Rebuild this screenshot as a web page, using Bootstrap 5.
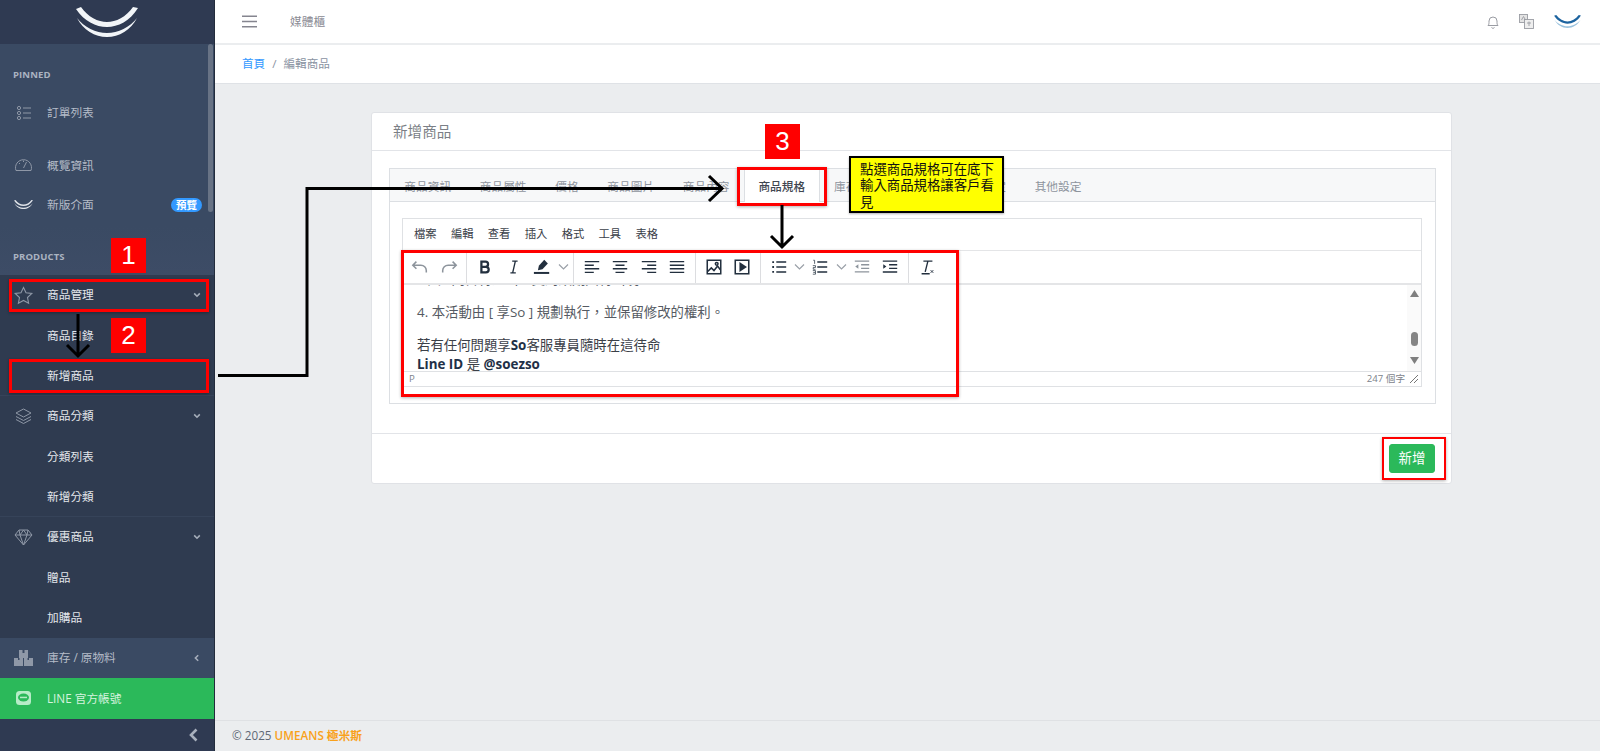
<!DOCTYPE html>
<html lang="zh-Hant">
<head>
<meta charset="utf-8">
<title>新增商品</title>
<link href="https://cdn.jsdelivr.net/npm/bootstrap@5.3.0/dist/css/bootstrap.min.css" rel="stylesheet">
<style>
body{font-family:"Open Sans","Noto Sans CJK TC",sans-serif;font-size:11.7px;background:#ebedef;overflow:hidden;height:751px;color:#3c4b64}
.page-shell{height:751px;position:relative}
.side{width:215px;flex:none;background:#3a4a63;border-right:1px solid #232c3c;position:relative;height:751px;overflow:hidden}
.side-logo{height:44px;background:#2f3a52;color:#f2f5f8}
.side-logo svg{width:62px;height:30px}
.side-title{font-size:9.5px;font-weight:700;color:#aab3c1;padding-left:13px;letter-spacing:.1px}
.t-pinned{height:49px;padding-top:24px}
.t-products{height:50px;padding-top:25px;background:linear-gradient(#3a4a63,#3d4c66)}
.gap-pinned{height:13px}
.side-item{height:40.350px;display:flex;align-items:center;color:#d3d8e0;text-decoration:none;padding-left:13px;position:relative}
.item-plain{height:40px}
.ico{width:21px;height:20px;flex:none;margin-right:13px;color:#8f98a7}
.side-item .lbl{flex:1}
.chev{width:8px;height:8px;margin-right:13px;color:#a5adba}
.dark-block{background:#2f3b50}
.dark-block .side-item{color:#e3e6eb}
.sep-bottom{border-bottom:1px solid #364359}
.dim{color:#b5bcc8!important}
.line-item{background:#2bb95a;color:#d6f3df!important;height:41px}
.line-item .ico{color:#b6ecc7}
.side-foot{height:32px;background:#2f3a52;color:#a9b1be;padding-right:15px}
.side-foot svg{width:11px;height:14px}
.side-thumb{position:absolute;right:1px;top:44px;width:5px;height:168px;border-radius:3px;background:#687385}
.pill-new{background:#3399ff;color:#fff;font-size:10.5px;font-weight:700;padding:1px 5px;margin-right:12px;line-height:12px}
.main-col{min-width:0}
.top-bar{height:45px;background:#fff;border-bottom:2px solid #ebedef;padding:0 18px 0 27px}
.burger{width:15px;height:13px;color:#85858f;margin-right:33px}
.top-name{color:#8a8a93}
.top-right{gap:19px}
.top-ico{color:#9a9ca3}
.crumb-bar{height:39px;background:#fff;border-bottom:1px solid #dfe2e6;padding:0 27px}
.crumb-bar .breadcrumb{font-size:11.600px;margin:0;--bs-breadcrumb-divider-color:#8a93a2;--bs-breadcrumb-item-active-color:#8a93a2;--bs-breadcrumb-item-padding-x:7px}
.crumb-bar a{color:#3399ff;text-decoration:none}
.content-zone{padding:28px 148px 0 156px}
.goods-card{height:372px;border-color:#e0e2e6;border-radius:3px}
.goods-head{height:38px;flex:none;background:#fff;font-size:14.6px;color:#7b7f86;padding:0 21px;display:flex;align-items:center;border-color:#e2e4e8}
.goods-body{padding:17px 15px 29px 17px;flex:none}
.tab-box{border:1px solid #dcdfe3;height:236px}
.goods-tabs{background:#f7f8f9;height:33px;border-bottom:1px solid #dcdfe3;padding-left:0;flex-wrap:nowrap}
.goods-tabs .nav-link{color:#8e949d;font-size:11.7px;padding:0 14.350px;height:33px;line-height:34px;border:0;border-radius:0;margin:0;white-space:nowrap}
.goods-tabs .nav-link.active{background:#fff;color:#3f4650;font-weight:500;border-left:1px solid #dcdfe3;border-right:1px solid #dcdfe3;height:33px;padding:0 13.500px}
.goods-tabs .nav-link.tab-wide{padding-left:17.350px}
.tab-pane-wrap{padding:16px 13px 17px 12px}
.editor{border:1px solid #dfe1e4;height:169px;background:#fff}
.ed-menu{height:32px;border-bottom:1px solid #e4e5e7;padding-left:11px;gap:14.300px;font-size:11.3px;color:#3a4048}
.ed-tools{height:34px;border-bottom:2px solid #e4e5e7}
.tgroup{display:flex;align-items:center;height:100%;padding:0 3px 0 4px;border-right:1px solid #dcdde0;flex:none}
.tgroup.tg-first{padding-left:3px}
.tgroup.nosep{border-right:0}
.tbtn{width:28.5px;height:100%;display:flex;align-items:center;justify-content:center;color:#222f3e}
.tbtn svg{width:18px;height:18px}
.tbtn.off{color:#8d949c}
.tmini{width:13px;height:100%;display:flex;align-items:center;justify-content:center;color:#9aa0a8}
.tmini svg{width:11px;height:8px}
.ed-body{height:86px;overflow:hidden}
.ed-text{padding:0 14px;font-size:13.4px;line-height:19px;color:#555a62;margin-bottom:-3px}
.ed-text p{margin:0 0 14px}
.ed-text p:last-child{margin:0}
.ed-strong{color:#3b4048}
.ed-strong b{color:#1f3047}
.fake-scroll{width:14px;flex:none;background:#fafafa;color:#7f7f7f;padding:5px 0 4px}
.fake-scroll svg{width:9px;height:7px}
.fake-thumb{width:7px;height:14px;border-radius:4px;background:#858585;margin:35px 0 11px}
.ed-status{height:15px;border-top:1px solid #dfe1e4;font-size:9.6px;color:#7d838b;padding:0 3px 0 6px}
.grip{width:8px;height:8px;margin-left:5px;color:#777}
.goods-foot{height:50px;flex:none;background:#fff;border-color:#e2e4e8;padding:0 16px 0 15px}
.add-btn{width:46px;height:29px;padding:0;background:#2bb95a;border-color:#2bb95a;font-size:13.4px;border-radius:3px}
.page-foot{height:31px;border-top:1px solid #dfe1e4;background:#ebedef;padding:0 17px;font-size:11.7px;color:#5f6875}
.page-foot strong{color:#f9a11b;font-weight:600}
.mark-box{position:absolute;border:3px solid #f00;box-shadow:0 1px 3px rgba(0,0,0,.3)}
.num-tag{position:absolute;width:35px;height:35px;background:#f00;color:#fff;font:26px/35px "Liberation Sans",sans-serif;text-align:center}
.note-box{position:absolute;left:849px;top:156px;width:155px;height:57px;background:#ff0;border:2px solid #000;color:#111;font-size:13.4px;line-height:16.300px;padding:3px 8px 0 9px;box-shadow:0 1px 2px rgba(0,0,0,.3)}
.arrows{position:absolute;left:0;top:0;width:1600px;height:751px;pointer-events:none}
</style>
</head>
<body>
<svg width="0" height="0" class="position-absolute">
<symbol id="umark" viewBox="0 0 62 30"><path fill="currentColor" d="M0 2 5 0C12 10 22 15 31 15C40 15 50 10 57 0L62 1C54 14 42 20 31 20C20 20 8 14 0 2Z"/><path fill="currentColor" d="M1 11C8 20 20 26 31 26C42 26 54 20 61 11C55 23 43 30 31 30C19 30 7 23 1 11Z"/></symbol>
<symbol id="cdown" viewBox="0 0 10 10"><path d="M1.500 3 5 6.500 8.500 3" fill="none" stroke="currentColor" stroke-width="2"/></symbol>
<symbol id="tchev" viewBox="0 0 11 8"><path d="M1 1.500 5.500 6 10 1.500" fill="none" stroke="currentColor" stroke-width="1.200"/></symbol>
</svg>
<div class="page-shell d-flex">
  <aside class="side d-flex flex-column">
    <div class="side-logo d-flex align-items-center justify-content-center"><svg><use href="#umark"/></svg></div>
    <div class="side-title t-pinned">PINNED</div>
    <a class="side-item item-plain dim" href="#"><svg class="ico" viewBox="0 0 21 20" fill="none" stroke="currentColor"><circle cx="6" cy="5" r="1.600"/><circle cx="6" cy="10" r="1.600"/><circle cx="6" cy="15" r="1.600"/><path d="M10 5h8M10 10h8M10 15h8"/></svg><span class="lbl">訂單列表</span></a>
    <div class="gap-pinned"></div>
    <a class="side-item item-plain dim" href="#"><svg class="ico" viewBox="0 0 21 20" fill="none" stroke="currentColor"><path d="M3 15.500a8 8 0 1 1 15 0z"/><path d="m10.500 13 3-6M6 8l1 1M10.500 5.500V7"/></svg><span class="lbl">概覽資訊</span></a>
    <a class="side-item item-plain dim" href="#"><svg class="ico" viewBox="0 0 21 20" style="color:#dfe3e8"><use href="#umark" x="1" y="4" width="19" height="11"/></svg><span class="lbl">新版介面</span><span class="badge rounded-pill pill-new">預覽</span></a>
    <div class="side-title t-products">PRODUCTS</div>
    <div class="dark-block">
      <a class="side-item" href="#"><svg class="ico" viewBox="0 0 21 20" fill="none" stroke="currentColor" stroke-width="1.100"><path d="m10.500 2.500 2.500 5.300 5.800.7-4.300 4 1.100 5.700-5.100-2.800-5.100 2.800 1.100-5.700-4.300-4 5.800-.7z"/></svg><span class="lbl">商品管理</span><svg class="chev"><use href="#cdown"/></svg></a>
      <a class="side-item" href="#"><span class="ico"></span><span class="lbl">商品目錄</span></a>
      <a class="side-item sep-bottom" href="#"><span class="ico"></span><span class="lbl">新增商品</span></a>
      <a class="side-item" href="#"><svg class="ico" viewBox="0 0 21 20" fill="none" stroke="currentColor"><path d="m10.500 3 7.500 4-7.500 4L3 7zM3 10.500l7.500 4 7.500-4M3 13.500l7.500 4 7.500-4"/></svg><span class="lbl">商品分類</span><svg class="chev"><use href="#cdown"/></svg></a>
      <a class="side-item" href="#"><span class="ico"></span><span class="lbl">分類列表</span></a>
      <a class="side-item sep-bottom" href="#"><span class="ico"></span><span class="lbl">新增分類</span></a>
      <a class="side-item" href="#"><svg class="ico" viewBox="0 0 21 20" fill="none" stroke="currentColor"><path d="M6 3h9l4 5-8.500 10L2 8zM2 8h17M7 8l3.500 10L14 8M6 3l1 5 3.500-5 3.500 5 1-5"/></svg><span class="lbl">優惠商品</span><svg class="chev"><use href="#cdown"/></svg></a>
      <a class="side-item" href="#"><span class="ico"></span><span class="lbl">贈品</span></a>
      <a class="side-item" href="#"><span class="ico"></span><span class="lbl">加購品</span></a>
    </div>
    <a class="side-item dim" href="#"><svg class="ico" viewBox="0 0 21 20" fill="currentColor"><path d="M6 2h3.500v3h2V2H15v8H6zM1 10h4v2h1.500v-2H10v8H1zM11 10h3.500v2H16v-2h4v8h-9z"/></svg><span class="lbl">庫存 / 原物料</span><svg class="chev" viewBox="0 0 10 10"><path d="M6.500 1.500 3 5l3.500 3.500" fill="none" stroke="currentColor" stroke-width="2"/></svg></a>
    <a class="side-item line-item" href="#"><svg class="ico" viewBox="0 0 21 20"><rect x="3" y="2" width="15" height="14" rx="3.500" fill="currentColor"/><ellipse cx="10.500" cy="8.500" rx="5.500" ry="4" fill="#2bb95a"/><rect x="7" y="7.700" width="7" height="1.500" fill="currentColor"/></svg><span class="lbl">LINE 官方帳號</span></a>
    <div class="side-foot flex-grow-1 d-flex align-items-center justify-content-end"><svg viewBox="0 0 11 14"><path d="M8.500 1.500 3 7l5.500 5.500" fill="none" stroke="currentColor" stroke-width="2.600"/></svg></div>
    <div class="side-thumb"></div>
  </aside>

  <div class="main-col flex-grow-1 d-flex flex-column">
    <header class="top-bar d-flex align-items-center">
      <svg class="burger" viewBox="0 0 15 13" fill="none" stroke="currentColor" stroke-width="1.500"><path d="M0 1.200h15M0 6.500h15M0 11.800h15"/></svg>
      <span class="top-name">媒體櫃</span>
      <div class="ms-auto d-flex align-items-center top-right">
        <svg class="top-ico" width="14" height="16" viewBox="0 0 14 16" fill="none" stroke="currentColor"><path d="M2 11.500c1-1 1-2 1-4.500a4 4 0 0 1 8 0c0 2.500 0 3.500 1 4.500zM5.500 13.500c.5 1 2.500 1 3 0"/></svg>
        <svg class="top-ico" width="15" height="15" viewBox="0 0 15 15" fill="none" stroke="currentColor" stroke-width=".9"><rect x=".5" y=".5" width="8" height="8" fill="#e4e4e4"/><rect x="5.500" y="5.500" width="9" height="9" fill="#eee"/><path d="M2.500 6 4.500 2.500 6.500 6M8 9h4M10 7.500V12"/></svg>
        <svg width="29" height="13" viewBox="0 0 62 30"><path fill="#1c639f" d="M0 2 5 0C12 10 22 15 31 15C40 15 50 10 57 0L62 1C54 14 42 20 31 20C20 20 8 14 0 2Z"/><path fill="#9cc3de" d="M1 11C8 20 20 26 31 26C42 26 54 20 61 11C55 23 43 30 31 30C19 30 7 23 1 11Z"/></svg>
      </div>
    </header>
    <nav class="crumb-bar d-flex align-items-center" aria-label="breadcrumb">
      <ol class="breadcrumb"><li class="breadcrumb-item"><a href="#">首頁</a></li><li class="breadcrumb-item active" aria-current="page">編輯商品</li></ol>
    </nav>
    <main class="content-zone flex-grow-1">
      <div class="card goods-card">
        <div class="card-header goods-head">新增商品</div>
        <div class="card-body goods-body">
          <div class="tab-box">
            <ul class="nav goods-tabs">
              <li class="nav-item"><a class="nav-link" href="#">商品資訊</a></li>
              <li class="nav-item"><a class="nav-link" href="#">商品屬性</a></li>
              <li class="nav-item"><a class="nav-link" href="#">價格</a></li>
              <li class="nav-item"><a class="nav-link" href="#">商品圖片</a></li>
              <li class="nav-item"><a class="nav-link" href="#">商品內容</a></li>
              <li class="nav-item"><a class="nav-link active" href="#">商品規格</a></li>
              <li class="nav-item"><a class="nav-link" href="#">庫存設定</a></li>
              <li class="nav-item"><a class="nav-link tab-wide" href="#">物流付款方式設定</a></li>
              <li class="nav-item"><a class="nav-link" href="#">其他設定</a></li>
            </ul>
            <div class="tab-pane-wrap">
              <div class="editor d-flex flex-column">
                <div class="ed-menu d-flex align-items-center"><span>檔案</span><span>編輯</span><span>查看</span><span>插入</span><span>格式</span><span>工具</span><span>表格</span></div>
                <div class="ed-tools d-flex">
                  <div class="tgroup tg-first">
                    <span class="tbtn off"><svg viewBox="0 0 20 20" fill="none" stroke="currentColor" stroke-width="1.700"><path d="M6 4 2 8l4 4M2 8h9a6 6 0 0 1 6 6v2"/></svg></span>
                    <span class="tbtn off"><svg viewBox="0 0 20 20" fill="none" stroke="currentColor" stroke-width="1.700"><path d="m14 4 4 4-4 4M18 8H9a6 6 0 0 0-6 6v2"/></svg></span>
                  </div>
                  <div class="tgroup">
                    <span class="tbtn"><svg viewBox="0 0 20 20" fill="none" stroke="currentColor" stroke-width="2.500"><path d="M6 4h4.500a2.800 2.800 0 0 1 0 5.800H6zM6 9.800h5a3.100 3.100 0 0 1 0 6.200H6z"/></svg></span>
                    <span class="tbtn"><svg viewBox="0 0 20 20" fill="none" stroke="currentColor" stroke-width="1.500"><path d="M8 3.500h6M6 16.500h6M11.500 3.500l-3 13"/></svg></span>
                    <span class="tbtn"><svg viewBox="0 0 20 20" fill="currentColor"><path d="m12.500 2 4 4-6 6.500-5 1 1-5z"/><rect x="1" y="15.500" width="17" height="2.200"/></svg></span>
                    <span class="tmini"><svg><use href="#tchev"/></svg></span>
                  </div>
                  <div class="tgroup">
                    <span class="tbtn"><svg viewBox="0 0 20 20" stroke="currentColor" stroke-width="1.600"><path d="M2 4h16M2 8h10M2 12h16M2 16h10"/></svg></span>
                    <span class="tbtn"><svg viewBox="0 0 20 20" stroke="currentColor" stroke-width="1.600"><path d="M2 4h16M5 8h10M2 12h16M5 16h10"/></svg></span>
                    <span class="tbtn"><svg viewBox="0 0 20 20" stroke="currentColor" stroke-width="1.600"><path d="M2 4h16M8 8h10M2 12h16M8 16h10"/></svg></span>
                    <span class="tbtn"><svg viewBox="0 0 20 20" stroke="currentColor" stroke-width="1.600"><path d="M2 4h16M2 8h16M2 12h16M2 16h16"/></svg></span>
                  </div>
                  <div class="tgroup">
                    <span class="tbtn"><svg viewBox="0 0 20 20" fill="none" stroke="currentColor" stroke-width="1.700"><rect x="2.500" y="2.500" width="15" height="15"/><path d="m3 15 4-4 3 3 4-5 3 4"/><circle cx="13" cy="6.500" r="1.500"/></svg></span>
                    <span class="tbtn"><svg viewBox="0 0 20 20" fill="none" stroke="currentColor" stroke-width="1.700"><rect x="2.500" y="2.500" width="15" height="15"/><path d="m8 6 6 4-6 4z" fill="currentColor"/></svg></span>
                  </div>
                  <div class="tgroup">
                    <span class="tbtn"><svg viewBox="0 0 20 20" stroke="currentColor" stroke-width="1.600"><path d="M7 4.500h11M7 10h11M7 15.500h11"/><path d="M2.500 4.500h2M2.500 10h2M2.500 15.500h2" stroke-width="2"/></svg></span>
                    <span class="tmini"><svg><use href="#tchev"/></svg></span>
                    <span class="tbtn"><svg viewBox="0 0 20 20" stroke="currentColor" stroke-width="1.600"><path d="M7 4.500h11M7 10h11M7 15.500h11"/><path d="M2.500 2.500h1.500v4M2 8.500h3v2H2.500v2H5M2 14h3v4H2M2.500 16h2" fill="none" stroke-width=".8"/></svg></span>
                    <span class="tmini"><svg><use href="#tchev"/></svg></span>
                    <span class="tbtn off"><svg viewBox="0 0 20 20" stroke="currentColor" stroke-width="1.400"><path d="M2 3.500h16M9 7.500h9M9 11.500h9M2 15.500h16" fill="none"/><path d="M6 7v5L2.500 9.500z" fill="currentColor" stroke="none"/></svg></span>
                    <span class="tbtn"><svg viewBox="0 0 20 20" stroke="currentColor" stroke-width="1.600"><path d="M2 3.500h16M9 7.500h9M9 11.500h9M2 15.500h16" fill="none"/><path d="M2.500 7v5L6 9.500z" fill="currentColor" stroke="none"/></svg></span>
                  </div>
                  <div class="tgroup nosep">
                    <span class="tbtn"><svg viewBox="0 0 20 20" fill="none" stroke="currentColor" stroke-width="1.500"><path d="M6 3.500h10M11 3.500 8 15.500M4 17.500h9"/><path d="m14 13.500 3 3M17 13.500l-3 3" stroke-width="1"/></svg></span>
                  </div>
                </div>
                <div class="ed-body d-flex">
                  <div class="ed-text flex-grow-1 d-flex flex-column justify-content-end">
                    <p>（2）同日特溫出一支局效期只特出現</p>
                    <p>4. 本活動由 [ 享So ] 規劃執行，並保留修改的權利。</p>
                    <p class="ed-strong">若有任何問題享<b>So</b>客服專員隨時在這待命<br><b>Line ID</b> 是 <b>@soezso</b></p>
                  </div>
                  <div class="fake-scroll d-flex flex-column align-items-center">
                    <svg viewBox="0 0 9 7" fill="currentColor"><path d="M4.500 0 9 7H0z"/></svg>
                    <div class="fake-thumb"></div>
                    <svg viewBox="0 0 9 7" fill="currentColor"><path d="M0 0h9L4.500 7z"/></svg>
                  </div>
                </div>
                <div class="ed-status d-flex align-items-center"><span>P</span><span class="ms-auto">247 個字</span><svg class="grip" viewBox="0 0 8 8" stroke="currentColor" fill="none"><path d="M0 8 8 0M4 8l4-4"/></svg></div>
              </div>
            </div>
          </div>
        </div>
        <div class="card-footer goods-foot d-flex align-items-center justify-content-end">
          <button type="button" class="btn btn-success add-btn">新增</button>
        </div>
      </div>
    </main>
    <footer class="page-foot d-flex align-items-center"><span>© 2025 <strong>UMEANS 極米斯</strong></span></footer>
  </div>

  <div class="mark-box" style="left:9px;top:279px;width:200px;height:33px"></div>
  <div class="mark-box" style="left:9px;top:359px;width:200px;height:34px"></div>
  <div class="mark-box" style="left:737px;top:167px;width:90px;height:39px"></div>
  <div class="mark-box" style="left:401px;top:250px;width:558px;height:147px"></div>
  <div class="mark-box" style="left:1382px;top:437px;width:64px;height:43px;border-width:2px"></div>
  <div class="num-tag" style="left:111px;top:238px">1</div>
  <div class="num-tag" style="left:111px;top:318px">2</div>
  <div class="num-tag" style="left:765px;top:124px">3</div>
  <svg class="arrows" viewBox="0 0 1600 751" fill="none" stroke="#000" stroke-width="3">
    <path d="M78 314V356M67 345l11 11 11-11"/>
    <path d="M218 375.500H307V188.500H722M709 176l13 12.500-13 12.500"/>
    <path d="M782 205V247M771 236l11 11 11-11"/>
  </svg>
  <div class="note-box">點選商品規格可在底下輸入商品規格讓客戶看見</div>
</div>
<script src="https://cdn.jsdelivr.net/npm/bootstrap@5.3.0/dist/js/bootstrap.bundle.min.js"></script>
</body>
</html>
